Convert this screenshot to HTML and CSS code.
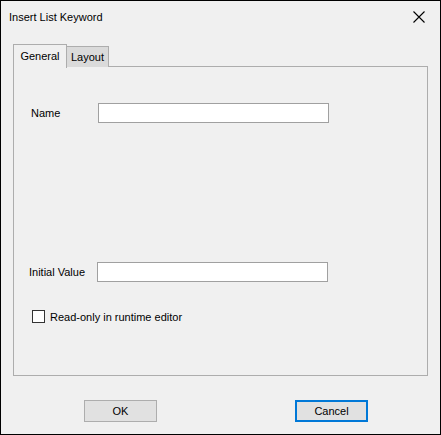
FILE: index.html
```html
<!DOCTYPE html>
<html>
<head>
<meta charset="utf-8">
<link rel="stylesheet" href="styles.css">
</head>
<body>
<div class="window">
  <div class="titlebar">
    <span class="title">Insert List Keyword</span>
    <svg class="close" width="12" height="12" viewBox="0 0 12 12"><path d="M0.5 0.5 L11.5 11.5 M11.5 0.5 L0.5 11.5" stroke="#000" stroke-width="1.1" fill="none"/></svg>
  </div>
  <div class="tabs">
    <div class="tab active">General</div>
    <div class="tab inactive">Layout</div>
  </div>
  <div class="panel">
    <div class="row row-name">
      <span class="label label-name">Name</span>
      <div class="input"></div>
    </div>
    <div class="row row-initial">
      <span class="label label-initial">Initial Value</span>
      <div class="input"></div>
    </div>
    <div class="row row-check">
      <span class="checkbox"></span>
      <span class="check-label">Read-only in runtime editor</span>
    </div>
  </div>
  <div class="buttons">
    <div class="btn btn-ok">OK</div>
    <div class="btn btn-cancel">Cancel</div>
  </div>
</div>
</body>
</html>
```
FILE: styles.css
```css
* { box-sizing: border-box; }
html, body { margin: 0; padding: 0; }
body {
  font-family: "Liberation Sans", Arial, sans-serif;
  font-size: 11px;
  color: #000;
  background: #fff;
}
.window {
  width: 441px;
  height: 435px;
  border: 1px solid #000;
  background: #f0f0f0;
  display: flex;
  flex-direction: column;
}
.titlebar {
  height: 31px;
  display: flex;
  align-items: center;
  justify-content: space-between;
  padding-left: 8px;
  padding-right: 15px;
}
.title { line-height: 16px; }
.close { display: block; }
.tabs {
  display: flex;
  align-items: flex-end;
  margin-left: 12px;
  margin-top: 11px;
  height: 24px;
  position: relative;
  z-index: 1;
}
.tab {
  border: 1px solid #adadad;
  border-bottom: none;
  text-align: center;
}
.tab.active {
  width: 54px;
  height: 24px;
  background: #f0f0f0;
  margin-bottom: -1px;
  line-height: 22px;
}
.tab.inactive {
  width: 42px;
  height: 21px;
  border-left: none;
  background: #dadada;
  line-height: 20px;
  margin-bottom: 0;
}
.panel {
  margin-left: 12px;
  margin-top: -1px;
  width: 415px;
  height: 310px;
  border: 1px solid #adadad;
  display: flex;
  flex-direction: column;
}
.row { display: flex; align-items: center; }
.input {
  width: 231px;
  height: 20px;
  background: #fff;
  border: 1px solid #a0a0a0;
}
.row-name { margin-top: 36px; }
.label-name { margin-left: 17px; width: 67px; }
.row-initial { margin-top: 139px; }
.label-initial { margin-left: 15px; width: 68px; }
.row-check { margin-top: 28px; margin-left: 18px; }
.checkbox {
  width: 13px;
  height: 13px;
  border: 1px solid #333;
  background: #fff;
  margin-right: 5px;
}
.buttons {
  display: flex;
  margin-top: 24px;
  margin-left: 83px;
  gap: 138px;
}
.btn {
  width: 73px;
  height: 22px;
  background: #e1e1e1;
  border: 1px solid #adadad;
  text-align: center;
  line-height: 20px;
}
.btn-cancel {
  border: 2px solid #0078d7;
  line-height: 18px;
}
```
